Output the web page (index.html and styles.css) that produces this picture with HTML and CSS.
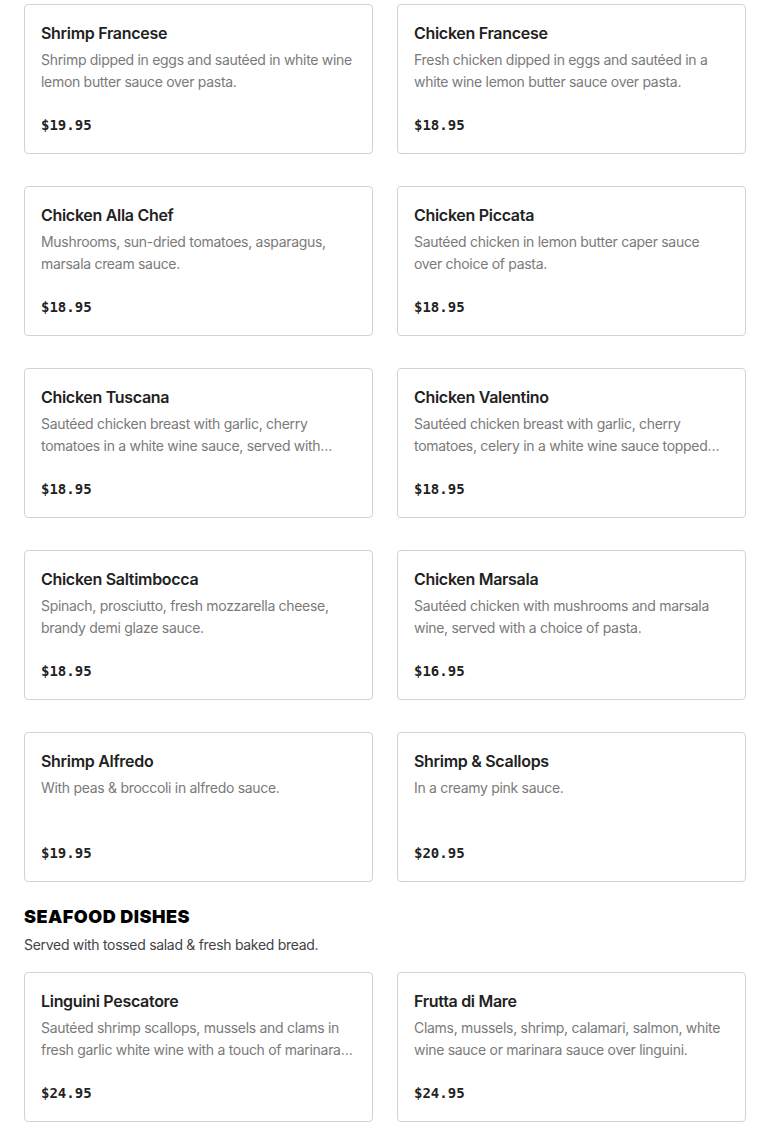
FILE: index.html
```html
<!DOCTYPE html>
<html lang="en">
<head>
<meta charset="utf-8">
<title>Menu</title>
<link rel="stylesheet" href="styles.css">
</head>
<body>
<main class="menu">
  <section class="grid">
    <article class="card"><h3 class="name">Shrimp Francese</h3><p class="desc">Shrimp dipped in eggs and sautéed in white wine lemon butter sauce over pasta.</p><div class="price">$19.95</div></article>
    <article class="card"><h3 class="name">Chicken Francese</h3><p class="desc">Fresh chicken dipped in eggs and sautéed in a white wine lemon butter sauce over pasta.</p><div class="price">$18.95</div></article>
    <article class="card"><h3 class="name">Chicken Alla Chef</h3><p class="desc">Mushrooms, sun-dried tomatoes, asparagus, marsala cream sauce.</p><div class="price">$18.95</div></article>
    <article class="card"><h3 class="name">Chicken Piccata</h3><p class="desc">Sautéed chicken in lemon butter caper sauce over choice of pasta.</p><div class="price">$18.95</div></article>
    <article class="card"><h3 class="name">Chicken Tuscana</h3><p class="desc">Sautéed chicken breast with garlic, cherry tomatoes in a white wine sauce, served with pasta of your choice.</p><div class="price">$18.95</div></article>
    <article class="card"><h3 class="name">Chicken Valentino</h3><p class="desc">Sautéed chicken breast with garlic, cherry tomatoes, celery in a white wine sauce topped with mozzarella.</p><div class="price">$18.95</div></article>
    <article class="card"><h3 class="name">Chicken Saltimbocca</h3><p class="desc">Spinach, prosciutto, fresh mozzarella cheese, brandy demi glaze sauce.</p><div class="price">$18.95</div></article>
    <article class="card"><h3 class="name">Chicken Marsala</h3><p class="desc">Sautéed chicken with mushrooms and marsala wine, served with a choice of pasta.</p><div class="price">$16.95</div></article>
    <article class="card"><h3 class="name">Shrimp Alfredo</h3><p class="desc">With peas &amp; broccoli in alfredo sauce.</p><div class="price">$19.95</div></article>
    <article class="card"><h3 class="name">Shrimp &amp; Scallops</h3><p class="desc">In a creamy pink sauce.</p><div class="price">$20.95</div></article>
  </section>
  <header class="section-head">
    <h2 class="section-title">SEAFOOD DISHES</h2>
    <p class="section-sub">Served with tossed salad &amp; fresh baked bread.</p>
  </header>
  <section class="grid">
    <article class="card"><h3 class="name">Linguini Pescatore</h3><p class="desc">Sautéed shrimp scallops, mussels and clams in fresh garlic white wine with a touch of marinara sauce over linguini.</p><div class="price">$24.95</div></article>
    <article class="card"><h3 class="name">Frutta di Mare</h3><p class="desc">Clams, mussels, shrimp, calamari, salmon, white wine sauce or marinara sauce over linguini.</p><div class="price">$24.95</div></article>
  </section>
</main>
</body>
</html>
```
FILE: styles.css
```css
* { box-sizing: border-box; }
html, body { margin: 0; padding: 0; background: #fff; }
body {
  font-family: "Inter", "Noto Sans", sans-serif;
  color: #222;
}
.menu { padding: 4px 24px 0 24px; }
.grid {
  display: grid;
  grid-template-columns: 1fr 1fr;
  column-gap: 24px;
  row-gap: 32px;
}
.card {
  border: 1px solid #d3d3d3;
  border-radius: 4px;
  padding: 16px;
  display: flex;
  flex-direction: column;
  height: 150px;
}
.name {
  margin: 0;
  font-size: 16px;
  line-height: 24px;
  font-weight: 600;
  letter-spacing: -0.3px;
  color: #222;
}
.desc {
  margin: 4px 0 0 0;
  font-size: 14px;
  line-height: 22px;
  letter-spacing: -0.3px;
  color: #7a7a7a;
  height: 44px;
  overflow: hidden;
  display: -webkit-box;
  -webkit-line-clamp: 2;
  -webkit-box-orient: vertical;
}
.price {
  margin-top: 20px;
  font-family: "DejaVu Sans Mono", "Liberation Mono", monospace;
  font-weight: 700;
  font-size: 14px;
  line-height: 24px;
  color: #222;
}
.section-head { padding: 23px 0 16px 0; }
.section-title {
  margin: 0;
  font-size: 18px;
  line-height: 24px;
  font-weight: 900;
  color: #000;
  letter-spacing: 0.5px;
}
.section-sub {
  margin: 5px 0 0 0;
  font-size: 14px;
  line-height: 22px;
  letter-spacing: -0.3px;
  color: #444;
}
```
